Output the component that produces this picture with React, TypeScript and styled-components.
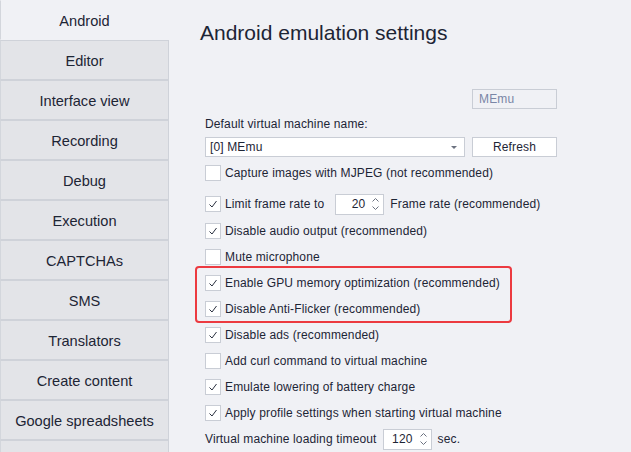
import React from "react";
import styled, { createGlobalStyle } from "styled-components";

const Global = createGlobalStyle`
  html, body { margin: 0; padding: 0; background: #f0f1f5; }
  body { font-family: "Liberation Sans", Arial, sans-serif; color: #1d2535; }
  * { box-sizing: border-box; }
`;

const Shell = styled.div`
  display: flex;
  width: 631px;
  height: 452px;
  overflow: hidden;
  background: #f0f1f5;
`;

const Sidebar = styled.nav`
  width: 169px;
  flex: none;
  display: flex;
  flex-direction: column;
`;

const Tab = styled.div<{ $active?: boolean }>`
  height: 40px;
  flex: none;
  display: flex;
  align-items: center;
  justify-content: center;
  padding-top: 1px;
  font-size: 14.6px;
  color: #1d2535;
  background: ${(p) => (p.$active ? "#f0f1f5" : "#e3e4e8")};
  border-left: 1px solid #d3d6dc;
  border-right: 1px solid ${(p) => (p.$active ? "transparent" : "#cfd2d9")};
  border-top: 1px solid ${(p) => (p.$active ? "transparent" : "#cfd2d9")};
  border-bottom: 1px solid ${(p) => (p.$active ? "transparent" : "#cfd2d9")};
`;

const Main = styled.main`
  flex: 1;
  padding: 0 0 0 31px;
  display: flex;
  flex-direction: column;
`;

const Title = styled.h1`
  margin: 19px 0 0 0;
  font-size: 21px;
  font-weight: normal;
  line-height: 28px;
  color: #1d2535;
`;

const Form = styled.div`
  width: 352px;
  margin-left: 5px;
  margin-top: 42px;
  display: flex;
  flex-direction: column;
  font-size: 12px;
  letter-spacing: 0.14px;
`;

const TopRight = styled.div`
  display: flex;
  justify-content: flex-end;
`;

const ReadOnlyBox = styled.div`
  width: 85px;
  height: 20px;
  border: 1px solid #c9cdd5;
  color: #7a86a6;
  font-size: 12px;
  padding-left: 6px;
  display: flex;
  align-items: center;
`;

const Label = styled.div`
  margin-top: 7px;
  height: 16px;
  line-height: 16px;
`;

const ComboRow = styled.div`
  margin-top: 5px;
  display: flex;
  gap: 7px;
  height: 20px;
`;

const Combo = styled.div`
  width: 260px;
  background: #fff;
  border: 1px solid #c9cdd5;
  display: flex;
  align-items: center;
  justify-content: space-between;
  padding: 0 7px 0 4px;
`;

const Caret = styled.span`
  width: 0;
  height: 0;
  border-left: 3px solid transparent;
  border-right: 3px solid transparent;
  border-top: 3px solid #6c7280;
`;

const Button = styled.div`
  width: 85px;
  background: #fff;
  border: 1px solid #c9cdd5;
  display: flex;
  align-items: center;
  justify-content: center;
`;

const Row = styled.div<{ $top: number }>`
  margin-top: ${(p) => p.$top}px;
  height: 20px;
  display: flex;
  align-items: center;
  white-space: nowrap;
`;

const Box = styled.span`
  width: 16px;
  height: 16px;
  flex: none;
  background: #fff;
  border: 1px solid #c9cdd5;
  display: flex;
  align-items: center;
  justify-content: center;
  margin-right: 4px;
`;

const Highlight = styled.div`
  margin: -1px 0 0 -10px;
  width: 317px;
  padding: 0 0 2px 8px;
  border: 2px solid #ec3a40;
  border-radius: 4px;
  display: flex;
  flex-direction: column;
`;

const Spin = styled.div<{ $w: number }>`
  width: ${(p) => p.$w}px;
  height: 21px;
  background: #fff;
  border: 1px solid #c9cdd5;
  display: flex;
  align-items: center;
  justify-content: flex-end;
  padding-right: 4px;
  gap: 7px;
`;

const Arrows = styled.span`
  display: flex;
  flex-direction: column;
  gap: 4px;
`;

const Spacer = styled.span<{ $w: number }>`
  display: inline-block;
  width: ${(p) => p.$w}px;
`;

const Check = () => (
  <svg width="12" height="12" viewBox="0 0 12 12">
    <path d="M2.5 6.5 L5 9 L9.5 3" fill="none" stroke="#2b3140" strokeWidth="1" />
  </svg>
);

const ArrowIcon = ({ up }: { up?: boolean }) => (
  <svg width="7" height="4" viewBox="0 0 7 4">
    <path
      d={up ? "M0.5 3.5 L3.5 0.5 L6.5 3.5" : "M0.5 0.5 L3.5 3.5 L6.5 0.5"}
      fill="none"
      stroke="#6c7280"
      strokeWidth="1"
    />
  </svg>
);

const CheckRow = ({ checked, label, top }: { checked?: boolean; label: string; top: number }) => (
  <Row $top={top}>
    <Box>{checked && <Check />}</Box>
    {label}
  </Row>
);

const Spinner = ({ value, width }: { value: string; width: number }) => (
  <Spin $w={width}>
    {value}
    <Arrows>
      <ArrowIcon up />
      <ArrowIcon />
    </Arrows>
  </Spin>
);

const tabs = [
  "Android",
  "Editor",
  "Interface view",
  "Recording",
  "Debug",
  "Execution",
  "CAPTCHAs",
  "SMS",
  "Translators",
  "Create content",
  "Google spreadsheets",
  "",
];

export default function App() {
  return (
    <Shell>
      <Global />
      <Sidebar>
        {tabs.map((t, i) => (
          <Tab key={i} $active={i === 0}>
            {t}
          </Tab>
        ))}
      </Sidebar>
      <Main>
        <Title>Android emulation settings</Title>
        <Form>
          <TopRight>
            <ReadOnlyBox>MEmu</ReadOnlyBox>
          </TopRight>
          <Label>Default virtual machine name:</Label>
          <ComboRow>
            <Combo>
              <span>[0] MEmu</span>
              <Caret />
            </Combo>
            <Button>Refresh</Button>
          </ComboRow>
          <CheckRow top={6} label="Capture images with MJPEG (not recommended)" />
          <Row $top={11}>
            <Box>
              <Check />
            </Box>
            Limit frame rate to
            <Spacer $w={11} />
            <Spinner value="20" width={49} />
            <Spacer $w={6} />
            Frame rate (recommended)
          </Row>
          <CheckRow checked top={7} label="Disable audio output (recommended)" />
          <CheckRow top={6} label="Mute microphone" />
          <Highlight>
            <CheckRow checked top={5} label="Enable GPU memory optimization (recommended)" />
            <CheckRow checked top={6} label="Disable Anti-Flicker (recommended)" />
          </Highlight>
          <CheckRow checked top={2} label="Disable ads (recommended)" />
          <CheckRow top={6} label="Add curl command to virtual machine" />
          <CheckRow checked top={6} label="Emulate lowering of battery charge" />
          <CheckRow checked top={6} label="Apply profile settings when starting virtual machine" />
          <Row $top={6}>
            Virtual machine loading timeout
            <Spacer $w={6} />
            <Spinner value="120" width={49} />
            <Spacer $w={6} />
            sec.
          </Row>
        </Form>
      </Main>
    </Shell>
  );
}
